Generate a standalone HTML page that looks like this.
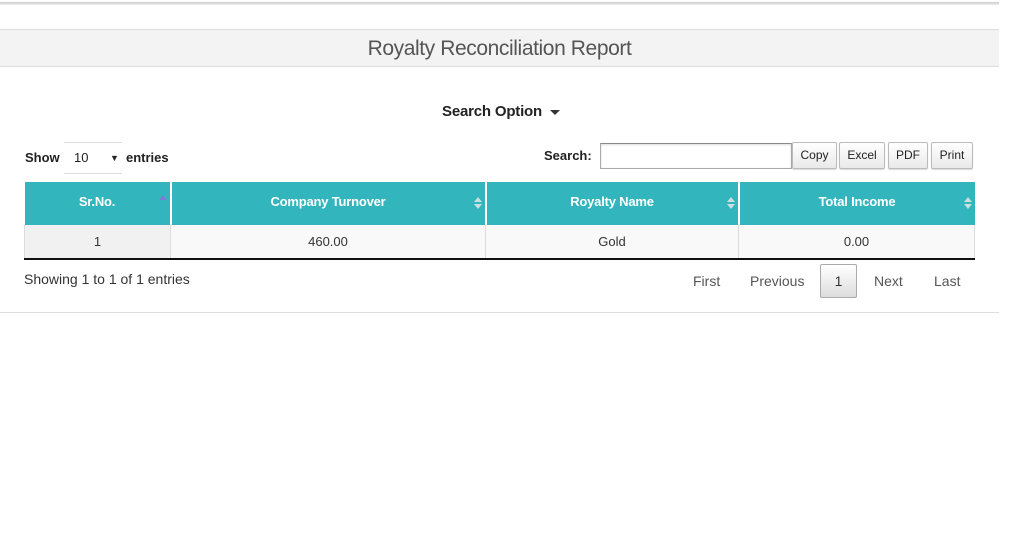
<!DOCTYPE html>
<html><head><meta charset="utf-8"><style>
*{box-sizing:border-box;margin:0;padding:0}
body{width:1011px;height:556px;background:#fff;font-family:"Liberation Sans",Arial,sans-serif;position:relative;overflow:hidden;color:#333}
.a{position:absolute}
.btn{position:absolute;top:142px;height:27px;border:1px solid #bbb;border-radius:2px;background:linear-gradient(#fff,#e9e9e9);font-size:12px;text-align:center;line-height:25px;color:#222;box-shadow:0 1px 1px rgba(0,0,0,.15)}
th{background:#33b5be;color:#fff;font-size:13px;font-weight:bold;height:43px;border-right:2px solid #fff;position:relative;padding-bottom:4px;letter-spacing:-0.2px}
th:last-child{border-right:0}
td{background:#f9f9f9;font-size:13px;text-align:center;height:34px;border-right:1px solid #ddd;color:#333}
.s{position:absolute;right:3px;top:14px;width:8px;height:14px}
</style></head><body>
<div class="a" style="left:0;top:2px;width:999px;height:3px;background:linear-gradient(#ccc,#eee)"></div>
<div class="a" style="left:0;top:29px;width:999px;height:38px;background:#f3f3f3;border-top:1px solid #ddd;border-bottom:1px solid #ddd;text-align:center;font-size:21px;line-height:38px;color:#555;letter-spacing:-0.4px">Royalty Reconciliation Report</div>
<div class="a" style="left:0;top:103px;width:1000px;text-align:center;font-size:15px;font-weight:bold;color:#222;padding-left:2px;letter-spacing:-0.2px">Search Option <span style="display:inline-block;width:0;height:0;border-left:5px solid transparent;border-right:5px solid transparent;border-top:5px solid #333;vertical-align:middle;margin-left:4px"></span></div>
<div class="a" style="left:25px;top:150px;font-size:13px;font-weight:bold;color:#222">Show</div>
<div class="a" style="left:64px;top:142px;width:58px;height:32px;border-top:1px solid #ddd;border-bottom:1px solid #ddd;font-size:13px;line-height:30px;padding-left:10px;color:#222">10<span style="position:absolute;left:46px;font-size:9px">▼</span></div>
<div class="a" style="left:126px;top:150px;font-size:13px;font-weight:bold;color:#222">entries</div>
<div class="a" style="left:544px;top:148px;font-size:13px;font-weight:bold;color:#222">Search:</div>
<div class="a" style="left:600px;top:143px;width:192px;height:26px;border:1px solid #aaa;border-top-color:#888;box-shadow:inset 0 1px 2px #ddd"></div>
<div class="btn" style="left:792px;width:45px">Copy</div>
<div class="btn" style="left:839px;width:46px">Excel</div>
<div class="btn" style="left:888px;width:40px">PDF</div>
<div class="btn" style="left:931px;width:42px">Print</div>
<table class="a" style="left:24px;top:182px;width:951px;border-collapse:collapse;border-bottom:2px solid #111;table-layout:fixed">
<colgroup><col style="width:146px"><col style="width:315px"><col style="width:253px"><col></colgroup>
<tr><th>Sr.No.<svg class="s" style="top:11px" viewBox="0 0 8 14"><path d="M0 7L4 2L8 7Z" fill="#7b7fd4"/></svg></th>
<th>Company Turnover<svg class="s" viewBox="0 0 8 14"><path d="M0 6L4 1L8 6ZM0 8L4 13L8 8Z" fill="#c9dfe0"/></svg></th>
<th>Royalty Name<svg class="s" viewBox="0 0 8 14"><path d="M0 6L4 1L8 6ZM0 8L4 13L8 8Z" fill="#c9dfe0"/></svg></th>
<th>Total Income<svg class="s" viewBox="0 0 8 14"><path d="M0 6L4 1L8 6ZM0 8L4 13L8 8Z" fill="#c9dfe0"/></svg></th></tr>
<tr><td style="background:#f1f1f1;border-left:1px solid #ddd">1</td><td>460.00</td><td>Gold</td><td>0.00</td></tr>
</table>
<div class="a" style="left:24px;top:271px;font-size:14px;color:#333">Showing 1 to 1 of 1 entries</div>
<div class="a" style="left:693px;top:273px;font-size:14px;color:#555">First</div>
<div class="a" style="left:750px;top:273px;font-size:14px;color:#555">Previous</div>
<div class="a" style="left:820px;top:264px;width:37px;height:34px;border:1px solid #aaa;border-radius:2px;background:linear-gradient(#fff,#ddd);text-align:center;line-height:32px;font-size:14px;color:#333">1</div>
<div class="a" style="left:874px;top:273px;font-size:14px;color:#555">Next</div>
<div class="a" style="left:934px;top:273px;font-size:14px;color:#555">Last</div>
<div class="a" style="left:0;top:312px;width:999px;height:1px;background:#ddd"></div>
</body></html>
